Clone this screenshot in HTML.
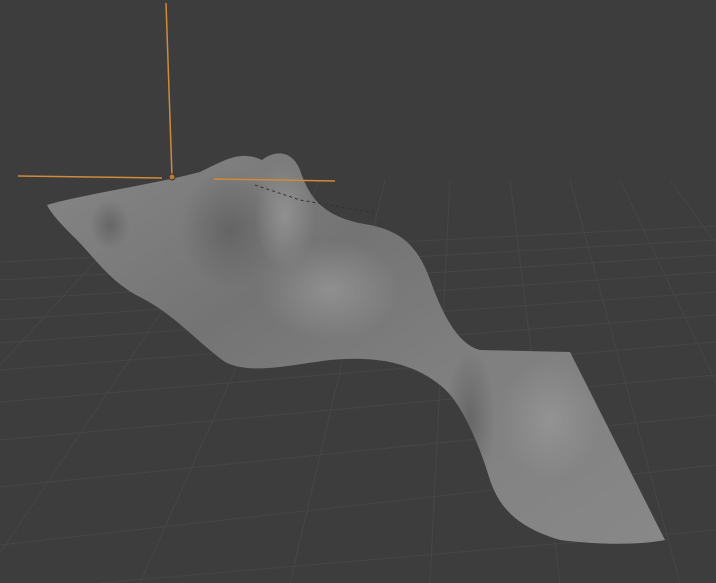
<!DOCTYPE html>
<html><head><style>
html,body{margin:0;padding:0;background:#3d3d3d;width:716px;height:583px;overflow:hidden}
</style></head><body>
<svg width="716" height="583" viewBox="0 0 716 583" xmlns="http://www.w3.org/2000/svg">
<defs>
<linearGradient id="m" x1="0" y1="0" x2="1" y2="1">
<stop offset="0" stop-color="#868686"/>
<stop offset="0.35" stop-color="#747474"/>
<stop offset="0.6" stop-color="#7f7f7f"/>
<stop offset="1" stop-color="#888888"/>
</linearGradient>
<radialGradient id="d1" cx="0.5" cy="0.5" r="0.5"><stop offset="0" stop-color="#5c5c5c" stop-opacity="0.7"/><stop offset="1" stop-color="#5c5c5c" stop-opacity="0"/></radialGradient>
<radialGradient id="l1" cx="0.5" cy="0.5" r="0.5"><stop offset="0" stop-color="#9a9a9a" stop-opacity="0.7"/><stop offset="1" stop-color="#9a9a9a" stop-opacity="0"/></radialGradient>
<clipPath id="c"><path d="M47,205 C80,195 150,185 200,172 C225,160 240,150 262,160 C275,150 292,150 300,170 C310,200 325,218 370,225 C405,232 420,250 432,285 C445,320 460,345 480,350 L570,352 L665,540 C640,545 600,545 560,540 C520,528 500,510 490,480 C478,440 460,400 440,385 C415,365 380,355 330,360 C290,365 250,375 225,362 C195,340 175,315 140,297 C110,282 95,258 75,238 C62,225 52,215 47,205 Z"/></clipPath>
</defs>
<g stroke="#464646" stroke-width="1" fill="none">
<line x1="0" y1="300" x2="716" y2="255"/>
<line x1="0" y1="320" x2="716" y2="272"/>
<line x1="0" y1="343" x2="716" y2="292"/>
<line x1="0" y1="370" x2="716" y2="315"/>
<line x1="0" y1="402" x2="716" y2="342"/>
<line x1="0" y1="440" x2="716" y2="375"/>
<line x1="0" y1="487" x2="716" y2="415"/>
<line x1="0" y1="545" x2="716" y2="465"/>
<line x1="100" y1="583" x2="716" y2="530"/>
<line x1="0" y1="280" x2="716" y2="240"/>
<line x1="0" y1="262" x2="716" y2="226"/>
<line x1="-200" y1="583" x2="170" y2="180"/>
<line x1="-20" y1="583" x2="250" y2="180"/>
<line x1="140" y1="583" x2="320" y2="180"/>
<line x1="290" y1="583" x2="385" y2="180"/>
<line x1="430" y1="583" x2="450" y2="180"/>
<line x1="560" y1="583" x2="510" y2="180"/>
<line x1="680" y1="583" x2="570" y2="180"/>
<line x1="800" y1="560" x2="620" y2="180"/>
<line x1="900" y1="500" x2="670" y2="180"/>
</g>
<path d="M47,205 C80,195 150,185 200,172 C225,160 240,150 262,160 C275,150 292,150 300,170 C310,200 325,218 370,225 C405,232 420,250 432,285 C445,320 460,345 480,350 L570,352 L665,540 C640,545 600,545 560,540 C520,528 500,510 490,480 C478,440 460,400 440,385 C415,365 380,355 330,360 C290,365 250,375 225,362 C195,340 175,315 140,297 C110,282 95,258 75,238 C62,225 52,215 47,205 Z" fill="url(#m)"/>
<g clip-path="url(#c)">
<ellipse cx="230" cy="230" rx="50" ry="60" fill="url(#d1)"/>
<ellipse cx="110" cy="225" rx="20" ry="25" fill="url(#d1)"/>
<ellipse cx="285" cy="215" rx="30" ry="55" fill="url(#l1)"/>
<ellipse cx="330" cy="290" rx="70" ry="50" fill="url(#l1)"/>
<ellipse cx="470" cy="420" rx="25" ry="70" fill="url(#d1)"/>
<ellipse cx="550" cy="420" rx="50" ry="60" fill="url(#l1)"/>
</g>
<path d="M255,185 L300,200 L375,213" stroke="#333" stroke-dasharray="3,3" fill="none"/>
<g stroke="#d08a3a" stroke-width="1.5">
<line x1="166" y1="3" x2="172" y2="177"/>
<line x1="18" y1="176" x2="162" y2="178"/>
<line x1="214" y1="179" x2="335" y2="181"/>
</g>
<circle cx="172" cy="177" r="3" fill="#c07a30" stroke="#333" stroke-width="1"/>
</svg>
</body></html>
